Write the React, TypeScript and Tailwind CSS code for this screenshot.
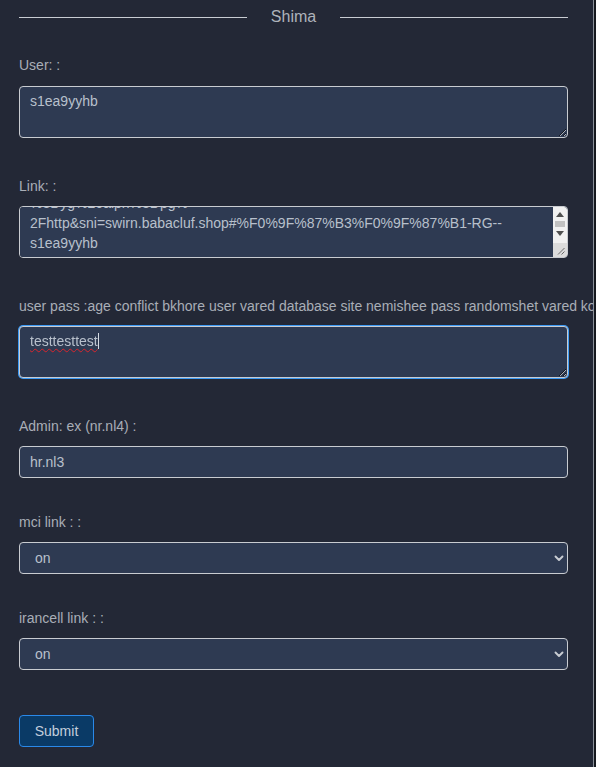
import { useEffect, useRef } from "react";

const linkText =
  "vless://8f2c1a7e-4b3d-4e0f-9a61-2c7d5e9b1f30@swirn.babacluf.shop:443?encryption=none&security=tls\n" +
  "&type=ws&fp=chrome&path=%2Fpypgp%3Fgyp%3Dypyg%26py%3Dgpy%26qp%3Dyg%26alpn%3Dpg%\n" +
  "2Fhttp&sni=swirn.babacluf.shop#%F0%9F%87%B3%F0%9F%87%B1-RG--\n" +
  "s1ea9yyhb";

function Label({ children }: { children: React.ReactNode }) {
  return (
    <label className="block h-5 whitespace-nowrap text-[14px] leading-5 text-[#a9aeb7]">
      {children}
    </label>
  );
}

function Chevron() {
  return (
    <svg
      className="pointer-events-none absolute right-[4px] top-1/2 -translate-y-1/2"
      width="10"
      height="8"
      viewBox="0 0 10 8"
      fill="none"
    >
      <path d="M1.5 2.5l3.5 3.5 3.5-3.5" stroke="#c9cdd3" strokeWidth="1.9" strokeLinecap="round" strokeLinejoin="round" />
    </svg>
  );
}

// scrollbar-e textarea link (headless scrollbar nemikeshe)
function FakeScrollbar() {
  return (
    <div className="pointer-events-none absolute right-px top-px bottom-px flex w-[14px] flex-col rounded-r-[3px] bg-[#f1f1f1]">
      <div className="flex h-[14px] items-center justify-center">
        <svg width="8" height="5" viewBox="0 0 8 5">
          <path d="M4 0L8 5H0z" fill="#505050" />
        </svg>
      </div>
      <div className="mx-auto h-[6px] w-[10px] bg-[#c1c1c1]" />
      <div className="flex h-[12px] items-center justify-center">
        <svg width="8" height="5" viewBox="0 0 8 5">
          <path d="M0 0h8L4 5z" fill="#505050" />
        </svg>
      </div>
      <div className="mt-auto flex h-[14px] items-end justify-end rounded-br-[3px] bg-[#dcdcdc] p-[2px]">
        <svg width="8" height="8" viewBox="0 0 8 8">
          <path d="M1 7.5L7.5 1M4.5 7.5L7.5 4.5" stroke="#6a6a6a" strokeWidth="1" />
        </svg>
      </div>
    </div>
  );
}

export default function App() {
  const linkRef = useRef<HTMLTextAreaElement>(null);

  useEffect(() => {
    if (linkRef.current) linkRef.current.scrollTop = linkRef.current.scrollHeight;
  }, []);

  const field =
    "block w-full rounded-[4px] border border-[#c9ccd1] bg-[#2e3a52] text-[14px] text-[#b8c0cc] outline-none";

  return (
    <div className="flex min-h-screen bg-[#232836] font-['Liberation_Sans',Arial,sans-serif]">
      <div className="w-[593px] shrink-0 overflow-hidden pl-[19px] pr-[25px]">
        {/* titr */}
        <div className="mt-[5px] flex h-6 items-center gap-6">
          <div className="h-px flex-1 bg-[#c8ccd2]" />
          <span className="text-[16px] leading-6 text-[#aeb3bb]">Shima</span>
          <div className="h-px flex-1 bg-[#c8ccd2]" />
        </div>

        <form className="mt-[26px]" onSubmit={(e) => e.preventDefault()}>
          <Label>User: :</Label>
          <textarea
            defaultValue="s1ea9yyhb"
            className={`${field} mt-[11px] mb-[38px] h-[52px] px-[10px] pt-1 pb-[3px] leading-5`}
          />

          <Label>Link: :</Label>
          <div className="relative mt-[10px] mb-[38px]">
            <textarea
              ref={linkRef}
              defaultValue={linkText}
              className={`${field} h-[52px] resize-none pl-[10px] pr-[26px] pt-1 pb-1 leading-5`}
            />
            <FakeScrollbar />
          </div>

          <Label>user pass :age conflict bkhore user vared database site nemishee pass randomshet vared konid</Label>
          <div className="relative mt-[10px] mb-[38px]">
            <textarea
              defaultValue="testtesttest"
              spellCheck
              className={`${field} h-[52px] border-[#3d9bf6] px-[10px] pt-1 pb-[3px] leading-5 underline decoration-[#d8262e] decoration-wavy decoration-1 underline-offset-2 shadow-[0_0_0_1px_#3d9bf6]`}
            />
            {/* caret */}
            <div className="absolute left-[79px] top-[7px] h-[16px] w-px bg-[#d6dbe3]" />
          </div>

          <Label>Admin: ex (nr.nl4) :</Label>
          <input
            defaultValue="hr.nl3"
            className={`${field} mt-[10px] mb-[34px] h-8 px-[10px] leading-5`}
          />

          <Label>mci link : :</Label>
          <div className="relative mt-[10px] mb-[34px]">
            <select defaultValue="on" className={`${field} h-8 appearance-none pl-[15px] pr-6`}>
              <option value="on">on</option>
              <option value="off">off</option>
            </select>
            <Chevron />
          </div>

          <Label>irancell link : :</Label>
          <div className="relative mt-[10px] mb-[45px]">
            <select defaultValue="on" className={`${field} h-8 appearance-none pl-[15px] pr-6`}>
              <option value="on">on</option>
              <option value="off">off</option>
            </select>
            <Chevron />
          </div>

          <button
            type="submit"
            className="h-8 w-[75px] rounded-[4px] border border-[#2a89e9] bg-[#0a3a66] text-[14px] text-[#c3cedc]"
          >
            Submit
          </button>
        </form>
      </div>
      <div className="w-px bg-[#8a9099]" />
      <div className="flex-1 bg-[#16191f]" />
    </div>
  );
}
